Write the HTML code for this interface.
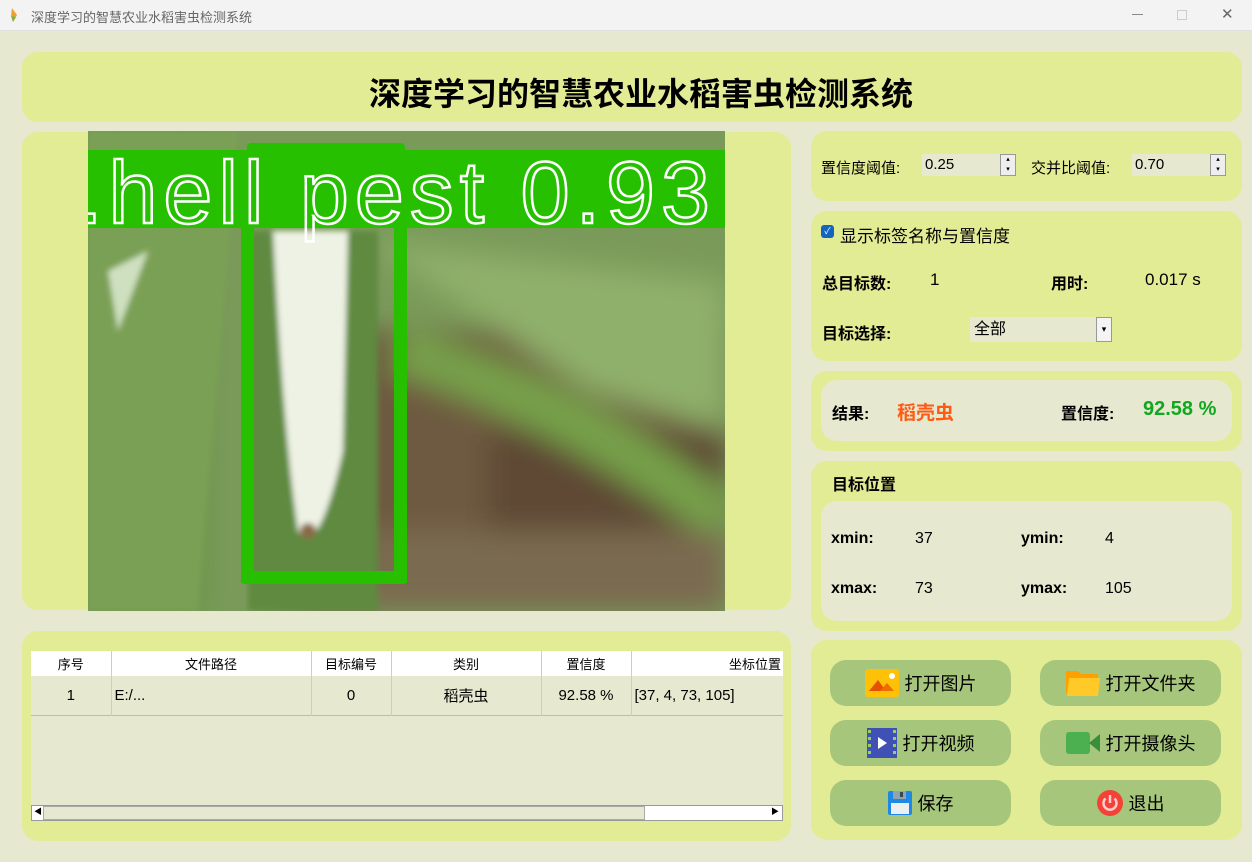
<!DOCTYPE html>
<html><head><meta charset="utf-8"><style>
*{margin:0;padding:0;box-sizing:border-box}
body{width:1252px;height:862px;background:#e6e8cf;font-family:"Liberation Sans","Noto Sans CJK SC",sans-serif;position:relative;overflow:hidden;color:#000}
.abs{position:absolute}
.panel{position:absolute;background:#e2ec94;border-radius:16px}
.tb{left:0;top:0;width:1252px;height:31px;background:#f3f3f3;border-bottom:1px solid #e0e0e0}
.btn{position:absolute;width:181px;height:46px;background:#a6c67c;border-radius:16px;font-size:18px;display:flex;align-items:center;justify-content:center;gap:6px}
.b{font-weight:bold}
.spin{position:absolute;height:22px;background:#e6e8cf;font-size:15px;line-height:22px;padding-left:3px}
.arr{position:absolute;right:0;top:0;width:16px;height:22px;border:1px solid #999;background:#eee;font-size:7px;line-height:10px;text-align:center}
th,td{font-weight:normal;border-right:1px solid #ccc}
</style></head><body>
<div class="abs tb">
<svg class="abs" style="left:10px;top:8px" width="8" height="14"><path d="M2 0L7 7L3 14L1 8Z" fill="#f0a030"/><path d="M1 8L3 14L6 9Z" fill="#7cb342"/></svg>
<div class="abs" style="left:31px;top:7px;font-size:13px;color:#666">深度学习的智慧农业水稻害虫检测系统</div>
<div class="abs" style="left:1132px;top:14px;width:11px;height:1px;background:#888"></div>
<div class="abs" style="left:1177px;top:10px;width:10px;height:10px;border:1px solid #ccc"></div>
<div class="abs" style="left:1221px;top:5px;font-size:15px;color:#666">✕</div>
</div>
<div class="panel" style="left:22px;top:52px;width:1220px;height:70px"></div>
<div class="abs b" style="left:0;width:1282px;top:69px;text-align:center;font-size:32px">深度学习的智慧农业水稻害虫检测系统</div>

<div class="panel" style="left:22px;top:132px;width:769px;height:478px"></div>
<svg class="abs" style="left:88px;top:131px" width="637" height="480">
<defs><filter id="bl"><feGaussianBlur stdDeviation="14"/></filter><filter id="bl2"><feGaussianBlur stdDeviation="3"/></filter></defs>
<rect width="637" height="480" fill="#7a9a5a"/>
<g filter="url(#bl)">
<rect x="200" y="200" width="440" height="280" fill="#6e5a40"/>
<rect x="400" y="300" width="240" height="180" fill="#5e4a34"/>
<path d="M280 110 L637 150 L637 300 L500 260 Z" fill="#8fb06a"/>
<path d="M300 240 Q480 300 637 420 L637 360 Q480 240 320 200Z" fill="#76a048"/>
<rect x="0" y="0" width="120" height="480" fill="#6a9448"/>
<rect x="200" y="400" width="440" height="80" fill="#7a6a50"/>
</g>
<g filter="url(#bl2)">
<path d="M0 0 L150 0 L110 480 L0 480Z" fill="#7aa055"/>
<path d="M20 140 L60 120 L30 200 Z" fill="#cfe0c0"/>
<rect x="160" y="100" width="130" height="380" fill="#5e8a40"/>
<path d="M185 100 L260 100 L255 320 Q230 430 210 400 Q195 300 185 100Z" fill="#eef2e4"/>
<circle cx="220" cy="400" r="8" fill="#8a6a4a"/>
</g>
<rect x="0" y="19" width="637" height="78" fill="#26c000"/>
<rect x="159" y="12" width="158" height="10" rx="4" fill="#26c000"/>
<rect x="153" y="97" width="13" height="355" fill="#26c000"/>
<rect x="306" y="97" width="13" height="355" fill="#26c000"/>
<rect x="153" y="440" width="166" height="13" rx="4" fill="#26c000"/>
<text x="-10" y="92" font-family="Liberation Sans" font-size="88" fill="none" stroke="#fff" stroke-width="2.5" letter-spacing="6">.hell pest 0.93</text>
</svg>

<div class="panel" style="left:22px;top:631px;width:769px;height:210px"></div>
<div class="abs" style="left:31px;top:651px;width:752px;height:170px;background:#e6e8cf;border-bottom:1px solid #888">
<table style="border-collapse:collapse;font-size:13px;width:752px">
<tr style="background:#fff;height:25px"><th style="width:80px">序号</th><th style="width:200px">文件路径</th><th style="width:80px">目标编号</th><th style="width:150px">类别</th><th style="width:90px">置信度</th><th style="text-align:right;padding-right:2px;border:none">坐标位置</th></tr>
<tr style="height:39px;font-size:15px;border-bottom:1px solid #bbb"><td style="text-align:center">1</td><td style="padding-left:3px">E:/...</td><td style="text-align:center">0</td><td style="text-align:center">稻壳虫</td><td style="text-align:center">92.58 %</td><td style="padding-left:3px;border:none">[37, 4, 73, 105]</td></tr>
</table>
<div class="abs" style="left:0;top:154px;width:752px;height:16px;background:#fff;border:1px solid #999"></div>
<div class="abs" style="left:12px;top:155px;width:602px;height:14px;background:#e6e8cf;border:1px solid #aaa"></div>
<div class="abs" style="left:3px;top:155px;font-size:8px">◀</div>
<div class="abs" style="left:740px;top:155px;font-size:8px">▶</div>
</div>

<div class="panel" style="left:811px;top:131px;width:431px;height:70px"></div>
<div class="abs" style="left:821px;top:157px;font-size:15px">置信度阈值:</div>
<div class="spin" style="left:922px;top:154px;width:94px">0.25<div class="arr">▴<br>▾</div></div>
<div class="abs" style="left:1031px;top:157px;font-size:15px">交并比阈值:</div>
<div class="spin" style="left:1132px;top:154px;width:94px">0.70<div class="arr">▴<br>▾</div></div>

<div class="panel" style="left:811px;top:211px;width:431px;height:150px"></div>
<div class="abs" style="left:821px;top:225px;width:13px;height:13px;background:#1565c0;border-radius:3px;color:#fff;font-size:9px;text-align:center;line-height:13px">✓</div>
<div class="abs" style="left:840px;top:222px;font-size:17px">显示标签名称与置信度</div>
<div class="abs b" style="left:822px;top:270px;font-size:16px">总目标数:</div>
<div class="abs" style="left:930px;top:270px;font-size:17px">1</div>
<div class="abs b" style="left:1051px;top:270px;font-size:16px">用时:</div>
<div class="abs" style="left:1145px;top:270px;font-size:17px">0.017 s</div>
<div class="abs b" style="left:822px;top:320px;font-size:16px">目标选择:</div>
<div class="abs" style="left:970px;top:317px;width:142px;height:25px;background:#e6e8cf;font-size:16px;line-height:25px;padding-left:4px">全部<div class="arr" style="height:25px;line-height:22px;font-size:9px;background:#f4f4f4">▾</div></div>

<div class="panel" style="left:811px;top:371px;width:431px;height:80px"></div>
<div class="abs" style="left:821px;top:380px;width:411px;height:61px;background:#e6e8cf;border-radius:16px"></div>
<div class="abs b" style="left:832px;top:400px;font-size:16px">结果:</div>
<div class="abs b" style="left:897px;top:398px;font-size:19px;color:#ff5a14">稻壳虫</div>
<div class="abs b" style="left:1061px;top:400px;font-size:16px">置信度:</div>
<div class="abs b" style="left:1143px;top:398px;font-size:20px;color:#10a820">92.58 %</div>

<div class="panel" style="left:811px;top:461px;width:431px;height:170px"></div>
<div class="abs b" style="left:832px;top:471px;font-size:16px">目标位置</div>
<div class="abs" style="left:821px;top:501px;width:411px;height:120px;background:#e6e8cf;border-radius:16px"></div>
<div class="abs b" style="left:831px;top:530px;font-size:16px">xmin:</div><div class="abs" style="left:915px;top:530px;font-size:16px">37</div>
<div class="abs b" style="left:1021px;top:530px;font-size:16px">ymin:</div><div class="abs" style="left:1105px;top:530px;font-size:16px">4</div>
<div class="abs b" style="left:831px;top:580px;font-size:16px">xmax:</div><div class="abs" style="left:915px;top:580px;font-size:16px">73</div>
<div class="abs b" style="left:1021px;top:580px;font-size:16px">ymax:</div><div class="abs" style="left:1105px;top:580px;font-size:16px">105</div>

<div class="panel" style="left:811px;top:640px;width:431px;height:200px"></div>
<div class="btn" style="left:830px;top:660px"><svg width="34" height="28"><rect width="34" height="28" rx="3" fill="#ffc107"/><path d="M4 22L13 11L21 22Z" fill="#e65100"/><path d="M15 22L22 14L29 22Z" fill="#ef6c00"/><circle cx="27" cy="7" r="3" fill="#fff"/></svg>打开图片</div>
<div class="btn" style="left:1040px;top:660px"><svg width="34" height="28"><path d="M0 2h12l3 3h17v20H0Z" fill="#ffa000"/><path d="M3 9h31l-2 18H1Z" fill="#ffca28"/></svg>打开文件夹</div>
<div class="btn" style="left:830px;top:720px"><svg width="30" height="30"><rect width="30" height="30" fill="#3f51b5"/><g fill="#9ccc65"><rect x="1" y="2" width="3" height="3"/><rect x="1" y="9" width="3" height="3"/><rect x="1" y="16" width="3" height="3"/><rect x="1" y="23" width="3" height="3"/><rect x="26" y="2" width="3" height="3"/><rect x="26" y="9" width="3" height="3"/><rect x="26" y="16" width="3" height="3"/><rect x="26" y="23" width="3" height="3"/></g><path d="M11 9L20 15L11 21Z" fill="#fff"/></svg>打开视频</div>
<div class="btn" style="left:1040px;top:720px"><svg width="34" height="22"><rect width="24" height="22" rx="3" fill="#4caf50"/><path d="M23 11L34 2V20Z" fill="#388e3c"/></svg>打开摄像头</div>
<div class="btn" style="left:830px;top:780px"><svg width="24" height="24"><rect width="24" height="24" rx="2" fill="#1e88e5"/><rect x="5" y="0" width="13" height="8" fill="#90a4ae"/><rect x="12" y="1" width="3" height="5" fill="#37474f"/><rect x="3" y="12" width="18" height="11" fill="#eceff1"/></svg>保存</div>
<div class="btn" style="left:1040px;top:780px"><svg width="26" height="26"><circle cx="13" cy="13" r="13" fill="#f44336"/><path d="M8.5 8.5A6.5 6.5 0 1 0 17.5 8.5" stroke="#ffcdd2" stroke-width="2.5" fill="none"/><path d="M13 5V13" stroke="#ffcdd2" stroke-width="2.5"/></svg>退出</div>
</body></html>
